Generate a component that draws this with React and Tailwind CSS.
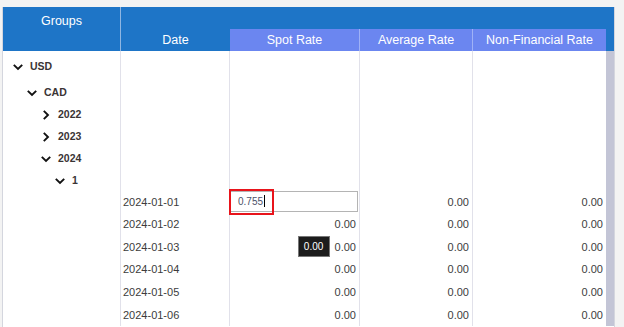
import React from 'react'

const cols = {
    groups: "w-[118px] shrink-0",
    date: "w-[109px] shrink-0",
    spot: "w-[130px] shrink-0",
    avg: "w-[113px] shrink-0",
    nonfin: "w-[133px] shrink-0",
}

const line = "border-r border-[#e1e1ea]"

function Chevron({ open }) {
    if (open) {
        return (
            <svg width="10" height="10" viewBox="0 0 10 10" className="shrink-0">
                <polyline points="0.8,2.8 5,7 9.2,2.8" fill="none" stroke="#111" strokeWidth="1.9" />
            </svg>
        )
    }
    return (
        <svg width="10" height="10" viewBox="0 0 10 10" className="shrink-0">
            <polyline points="2.8,0.8 7,5 2.8,9.2" fill="none" stroke="#111" strokeWidth="1.9" />
        </svg>
    )
}

function TreeItem({ label, level, open, h }) {
    const pad = ["pl-[10px]", "pl-[24px]", "pl-[38px]", "pl-[52px]"][level]
    return (
        <div className={`flex items-center gap-[7px] ${pad} ${h} text-[10.5px] font-bold text-[#3a3434]`}>
            <Chevron open={open} />
            <span>{label}</span>
        </div>
    )
}

function DataRow({ date, first, tip }) {
    return (
        <div className="flex h-[22.6px] text-[11px] text-[#3c3c3c]">
            <div className={`${cols.groups} ${line}`} />
            <div className={`${cols.date} ${line} flex items-center pl-[2px]`}>{date}</div>
            <div className={`${cols.spot} ${line} relative flex items-center justify-end pr-[3px]`}>
                {first ? (
                    <>
                        <div className="absolute left-0 right-[1px] top-[0px] bottom-[1px] border border-[#b4b4b4] bg-white flex items-center pl-[7px] text-[10px] text-[#4b5269]">
                            0.755<span className="ml-[1px] w-[1px] h-[12px] bg-black" />
                        </div>
                        <div className="absolute left-[-1px] top-[-2px] w-[45px] h-[26px] border-2 border-[#e8141b]" />
                    </>
                ) : (
                    <>
                        {tip && (
                            <div className="mr-[5px] w-[32px] h-[21px] bg-[#1c1c1c] border border-[#777] text-white text-[10px] flex items-center justify-center">
                                0.00
                            </div>
                        )}
                        0.00
                    </>
                )}
            </div>
            <div className={`${cols.avg} ${line} flex items-center justify-end pr-[3px]`}>0.00</div>
            <div className={`${cols.nonfin} flex items-center justify-end pr-[3px]`}>0.00</div>
            <div className="w-[8px] shrink-0 bg-[#c3c5d6]" />
        </div>
    )
}

export default function App() {
    const dates = ["2024-01-01", "2024-01-02", "2024-01-03", "2024-01-04", "2024-01-05", "2024-01-06"]
    return (
        <div className="min-h-screen bg-[#f3f3f3] pt-[7px] pl-[2px] font-['Liberation_Sans',Arial,sans-serif]">
            <div className="w-[613px] h-[330px] border-l border-r border-[#d4d6de] bg-white flex flex-col overflow-hidden">
                {/* header */}
                <div className="flex h-[44px] shrink-0 bg-[#1e75c7] text-white text-[12.5px]">
                    <div className={`${cols.groups} border-r border-[#8fb6e2] flex justify-center pt-[5px]`}>Groups</div>
                    <div className="flex-1 flex flex-col">
                        <div className="h-[22px]" />
                        <div className="flex h-[22px]">
                            <div className={`${cols.date} flex items-center justify-center`}>Date</div>
                            <div className={`${cols.spot} border-r border-[#9fb2f6] bg-[#6b86f0] flex items-center justify-center`}>Spot Rate</div>
                            <div className={`${cols.avg} border-r border-[#9fb2f6] bg-[#6b86f0] flex items-center justify-center`}>Average Rate</div>
                            <div className={`${cols.nonfin} bg-[#6b86f0] flex items-center justify-center`}>Non-Financial Rate</div>
                        </div>
                    </div>
                </div>

                {/* tree area */}
                <div className="flex h-[139.5px] shrink-0">
                    <div className={`${cols.groups} ${line} pt-[2px]`}>
                        <TreeItem label="USD" level={0} open h="h-[28px]" />
                        <TreeItem label="CAD" level={1} open h="h-[23px]" />
                        <TreeItem label="2022" level={2} h="h-[22px]" />
                        <TreeItem label="2023" level={2} h="h-[22px]" />
                        <TreeItem label="2024" level={2} open h="h-[22px]" />
                        <TreeItem label="1" level={3} open h="h-[22px]" />
                    </div>
                    <div className={`${cols.date} ${line}`} />
                    <div className={`${cols.spot} ${line}`} />
                    <div className={`${cols.avg} ${line}`} />
                    <div className={cols.nonfin} />
                    <div className="w-[8px] shrink-0 bg-[#c3c5d6]" />
                </div>

                {dates.map((d, i) => (
                    <DataRow key={d} date={d} first={i === 0} tip={i === 2} />
                ))}
            </div>
        </div>
    )
}
